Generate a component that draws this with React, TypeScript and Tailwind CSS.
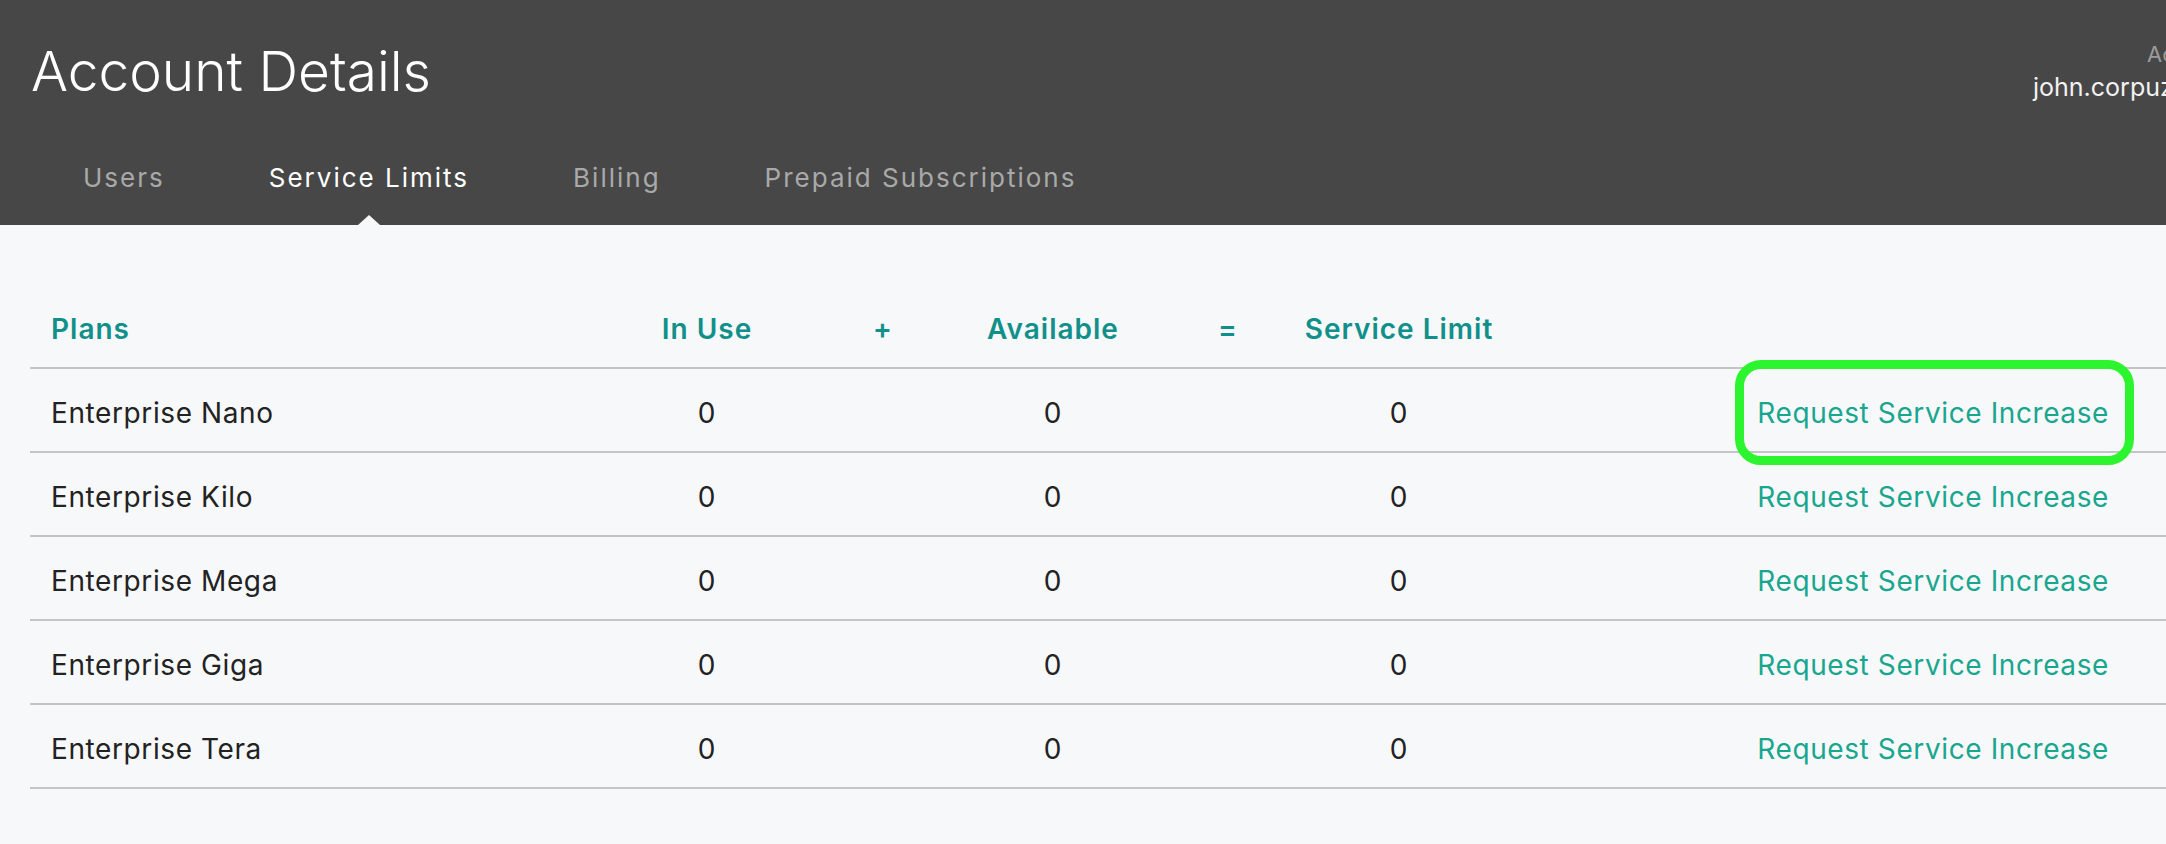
const TABS = ['Users', 'Service Limits', 'Billing', 'Prepaid Subscriptions'];
const PLANS = ['Enterprise Nano', 'Enterprise Kilo', 'Enterprise Mega', 'Enterprise Giga', 'Enterprise Tera'];

// columns are sized so each number sits under its heading
const GRID = 'grid grid-cols-[590px_174px_178px_162px_188px_154px_1fr] items-center';

export default function App() {
  return (
    <div className="min-h-screen w-full overflow-hidden bg-[#f7f8fa] font-['Inter',sans-serif]">
      <header className="flex h-[225px] flex-col bg-[#474747]">
        <div className="flex">
          <h1 className="pl-[31px] pt-[44px] text-[55px] font-light leading-none text-white">Account Details</h1>
          <div className="ml-auto w-[133px] shrink-0 whitespace-nowrap pt-[43px]">
            <div className="pl-[114px] text-[22px] leading-none text-[#9b9b9b]">Account Owner</div>
            <div className="mt-[10px] text-[25px] leading-none text-[#f2f2f2]">john.corpuz@company.com</div>
          </div>
        </div>
        <nav className="mt-auto flex pl-[31px]">
          {TABS.map(tab => {
            const active = tab === 'Service Limits';
            return (
              <div
                key={tab}
                className={`relative px-[52px] pb-[34px] text-[26px] leading-none tracking-[2px] ${active ? 'text-white' : 'text-[#a9a9a9]'}`}
              >
                {tab}
                {active && (
                  <span className="absolute bottom-0 left-1/2 -translate-x-1/2 border-x-[11px] border-b-[10px] border-x-transparent border-b-[#f7f8fa]" />
                )}
              </div>
            );
          })}
        </nav>
      </header>

      <main className="pl-[30px] pt-[60px]">
        <div className={`${GRID} h-[84px] border-b-2 border-[#c4c4c4] pt-[5px] text-[28px] font-semibold tracking-[1px] text-[#11908b]`}>
          <div className="pl-[21px]">Plans</div>
          <div className="flex justify-center whitespace-nowrap">In Use</div>
          <div className="flex justify-center">+</div>
          <div className="flex justify-center whitespace-nowrap">Available</div>
          <div className="flex justify-center">=</div>
          <div className="flex justify-center whitespace-nowrap">Service Limit</div>
          <div />
        </div>
        {PLANS.map((plan, i) => (
          <div key={plan} className={`${GRID} h-[84px] border-b-2 border-[#c4c4c4] text-[28px] tracking-[0.6px] text-[#222]`}>
            <div className="whitespace-nowrap pl-[21px] pt-[5px]">{plan}</div>
            <div className="flex justify-center pt-[5px]">0</div>
            <div />
            <div className="flex justify-center pt-[5px]">0</div>
            <div />
            <div className="flex justify-center pt-[5px]">0</div>
            <div className="relative flex h-full items-center justify-end pr-[57px] pt-[5px]">
              <a className="whitespace-nowrap text-[#19a68f]">Request Service Increase</a>
              {i === 0 && (
                <span className="absolute -top-[9px] -bottom-[14px] left-[259px] right-[32px] rounded-[26px] border-[9px] border-[#2cf52f]" />
              )}
            </div>
          </div>
        ))}
      </main>
    </div>
  );
}
